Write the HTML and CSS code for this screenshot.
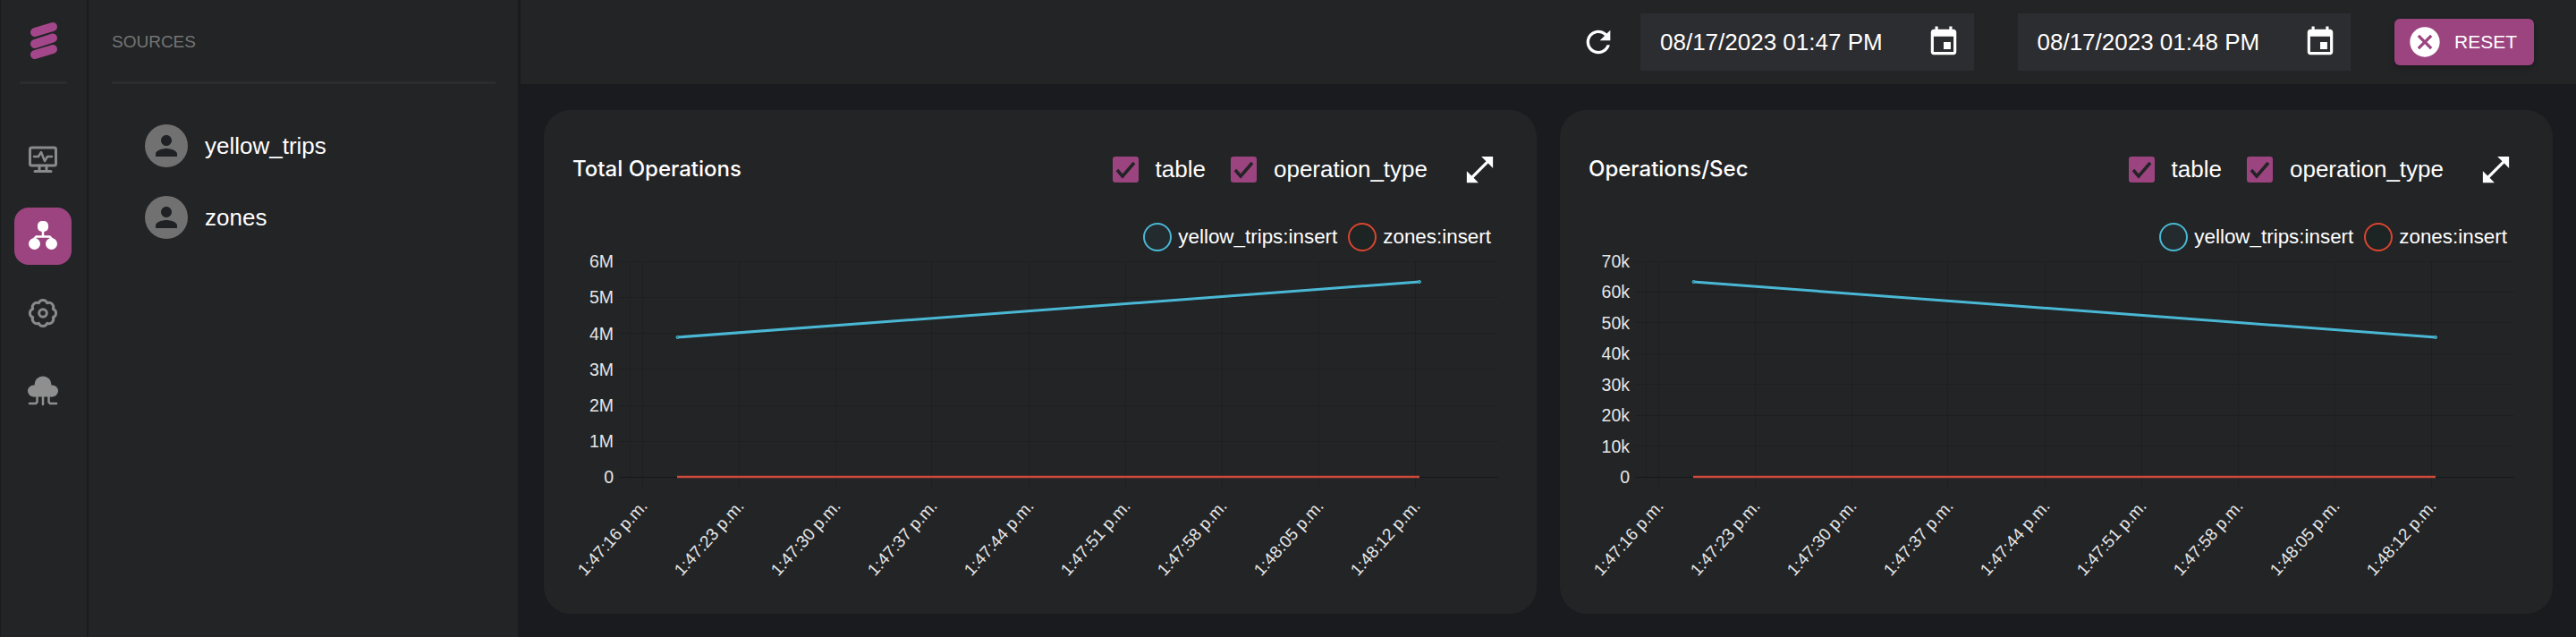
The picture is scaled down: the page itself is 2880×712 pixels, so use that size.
FILE: index.html
```html
<!DOCTYPE html>
<html lang="en">
<head>
    <meta charset="UTF-8">
    <meta name="viewport" content="width=device-width, initial-scale=1.0">
    <title>Sources</title>
    <link rel="stylesheet" href="styles.css">
</head>
<body>
    <div class="app">
        <nav class="rail">
            <div class="rail-logo">
                <svg width="48" height="48" viewBox="0 0 48 48"><path class="logo-bars" d="M14 15 L34 9 M14 28 L34 21.500 M14 40 L34 34"/></svg>
            </div>
            <div class="rail-line"></div>
            <div class="rail-items">
                <div class="rail-item">
                    <svg class="line-icon" width="48" height="48" viewBox="0 0 48 48">
                        <rect x="9.5" y="11" width="29" height="20" rx="2"/>
                        <path d="M20 31v6M28 31v6M15 37.5h18"/>
                        <path class="pulse" d="M14 21h5l3-5 4 10 3-5h5"/>
                    </svg>
                </div>
                <div class="rail-item active">
                    <svg width="48" height="48" viewBox="0 0 48 48">
                        <rect class="node" x="18" y="7" width="12" height="12" rx="5"/>
                        <circle class="node" cx="14.5" cy="32.5" r="6.5"/>
                        <circle class="node" cx="33.5" cy="32.5" r="6.5"/>
                        <path class="node-line" d="M24 19v5M14.5 28v-1.5l2-2h15l2 2V28"/>
                    </svg>
                </div>
                <div class="rail-item">
                    <svg class="line-icon" width="48" height="48" viewBox="0 0 48 48">
                        <g transform="translate(24 24)">
                            <path d="M4.7 -11.3A5 5 0 0 1 11.3 -4.7A5 5 0 0 1 11.3 4.7A5 5 0 0 1 4.7 11.3A5 5 0 0 1 -4.7 11.3A5 5 0 0 1 -11.3 4.7A5 5 0 0 1 -11.3 -4.7A5 5 0 0 1 -4.7 -11.3A5 5 0 0 1 4.7 -11.3Z"/>
                            <circle r="4.3"/>
                        </g>
                    </svg>
                </div>
                <div class="rail-item">
                    <svg width="48" height="48" viewBox="0 0 48 48">
                        <g class="cloud">
                            <circle cx="24" cy="18" r="9.5"/>
                            <circle cx="13.5" cy="25" r="6.5"/>
                            <circle cx="34.5" cy="25" r="6.5"/>
                            <rect x="13" y="22" width="22" height="9.5"/>
                        </g>
                        <path class="cloud-legs" d="M24 31v9M17.5 31v6.5l-1.5 1.5H9M30.5 31v6.5l1.5 1.5H39"/>
                    </svg>
                </div>
            </div>
        </nav>

        <aside class="sidebar">
            <div class="sidebar-title">SOURCES</div>
            <div class="sidebar-line"></div>
            <ul class="source-list">
                <li class="source-item">
                    <span class="avatar">
                        <svg width="36" height="36" viewBox="0 0 24 24"><path d="M12 12c2.21 0 4-1.79 4-4s-1.79-4-4-4-4 1.79-4 4 1.79 4 4 4zm0 2c-2.67 0-8 1.34-8 4v2h16v-2c0-2.66-5.33-4-8-4z"/></svg>
                    </span>
                    yellow_trips
                </li>
                <li class="source-item">
                    <span class="avatar">
                        <svg width="36" height="36" viewBox="0 0 24 24"><path d="M12 12c2.21 0 4-1.79 4-4s-1.79-4-4-4-4 1.79-4 4 1.79 4 4 4zm0 2c-2.67 0-8 1.34-8 4v2h16v-2c0-2.66-5.33-4-8-4z"/></svg>
                    </span>
                    zones
                </li>
            </ul>
        </aside>

        <main class="main">
            <header class="topbar">
                <svg class="white-icon" width="40" height="40" viewBox="0 0 24 24"><path d="M17.65 6.35C16.2 4.9 14.21 4 12 4c-4.42 0-7.99 3.58-7.99 8s3.57 8 7.99 8c3.73 0 6.84-2.55 7.73-6h-2.08c-.82 2.33-3.04 4-5.65 4-3.31 0-6-2.69-6-6s2.69-6 6-6c1.66 0 3.14.69 4.22 1.78L13 11h7V4l-2.35 2.35z"/></svg>
                <div class="date-field">
                    <span>08/17/2023 01:47 PM</span>
                    <svg class="white-icon" width="38" height="38" viewBox="0 0 24 24"><path d="M17 12h-5v5h5v-5zM16 1v2H8V1H6v2H5c-1.11 0-1.99.9-1.99 2L3 19c0 1.1.89 2 2 2h14c1.1 0 2-.9 2-2V5c0-1.1-.9-2-2-2h-1V1h-2zm3 18H5V8h14v11z"/></svg>
                </div>
                <div class="date-field">
                    <span>08/17/2023 01:48 PM</span>
                    <svg class="white-icon" width="38" height="38" viewBox="0 0 24 24"><path d="M17 12h-5v5h5v-5zM16 1v2H8V1H6v2H5c-1.11 0-1.99.9-1.99 2L3 19c0 1.1.89 2 2 2h14c1.1 0 2-.9 2-2V5c0-1.1-.9-2-2-2h-1V1h-2zm3 18H5V8h14v11z"/></svg>
                </div>
                <button class="reset-btn">
                    <svg class="white-icon" width="40" height="40" viewBox="0 0 24 24"><path d="M12 2C6.47 2 2 6.47 2 12s4.47 10 10 10 10-4.47 10-10S17.53 2 12 2zm5 13.59L15.59 17 12 13.41 8.41 17 7 15.59 10.59 12 7 8.41 8.41 7 12 10.59 15.59 7 17 8.41 13.41 12 17 15.59z"/></svg>
                    RESET
                </button>
            </header>

            <div class="charts">
                <section class="card">
                    <div class="card-head">
                        <h2 class="card-title">Total Operations</h2>
                        <label class="check">
                            <span class="check-box"><svg width="29" height="29" viewBox="0 0 29 29"><path d="M5 15l6 7L24 7"/></svg></span>
                            table
                        </label>
                        <label class="check">
                            <span class="check-box"><svg width="29" height="29" viewBox="0 0 29 29"><path d="M5 15l6 7L24 7"/></svg></span>
                            operation_type
                        </label>
                        <svg class="white-icon expand" width="39" height="39" viewBox="0 0 24 24"><path d="M21 11V3h-8l3.29 3.29-10 10L3 13v8h8l-3.29-3.29 10-10z"/></svg>
                    </div>
                    <div class="legend">
                        <span class="legend-dot blue"></span><span>yellow_trips:insert</span>
                        <span class="legend-dot red"></span><span>zones:insert</span>
                    </div>
                    <svg class="chart" width="1110" height="404" viewBox="0 0 1110 404">
                        <path class="grid" d="M84 10.5H1067M84 50.5H1067M84 90.5H1067M84 130.5H1067M84 171.5H1067M84 211.5H1067"/>
                        <path class="grid" d="M96.5 10V251M110.500 10V265M218.500 10V265M326.500 10V265M433.500 10V265M542.500 10V265M650.500 10V265M758.500 10V265M866.500 10V265M974.500 10V265"/>
                        <path class="axis" d="M84 251.500H1067"/>
                        <g class="y-labels">
                            <text x="78" y="10">6M</text>
                            <text x="78" y="50">5M</text>
                            <text x="78" y="91">4M</text>
                            <text x="78" y="131">3M</text>
                            <text x="78" y="171">2M</text>
                            <text x="78" y="211">1M</text>
                            <text x="78" y="251">0</text>
                        </g>
                        <g class="x-labels">
                            <text transform="translate(112 280) rotate(-48)">1:47:16 p.m.</text>
                            <text transform="translate(220 280) rotate(-48)">1:47:23 p.m.</text>
                            <text transform="translate(328 280) rotate(-48)">1:47:30 p.m.</text>
                            <text transform="translate(436 280) rotate(-48)">1:47:37 p.m.</text>
                            <text transform="translate(544 280) rotate(-48)">1:47:44 p.m.</text>
                            <text transform="translate(652 280) rotate(-48)">1:47:51 p.m.</text>
                            <text transform="translate(760 280) rotate(-48)">1:47:58 p.m.</text>
                            <text transform="translate(868 280) rotate(-48)">1:48:05 p.m.</text>
                            <text transform="translate(976 280) rotate(-48)">1:48:12 p.m.</text>
                        </g>
                        <path class="line-blue" d="M149 95L979 33"/>
                        <path class="line-red" d="M149 251H979"/>
                        <circle class="point-blue" cx="149.500" cy="95" r="1.500"/>
                        <circle class="point-blue" cx="979" cy="33" r="1.500"/>
                    </svg>
                </section>

                <section class="card">
                    <div class="card-head">
                        <h2 class="card-title">Operations/Sec</h2>
                        <label class="check">
                            <span class="check-box"><svg width="29" height="29" viewBox="0 0 29 29"><path d="M5 15l6 7L24 7"/></svg></span>
                            table
                        </label>
                        <label class="check">
                            <span class="check-box"><svg width="29" height="29" viewBox="0 0 29 29"><path d="M5 15l6 7L24 7"/></svg></span>
                            operation_type
                        </label>
                        <svg class="white-icon expand" width="39" height="39" viewBox="0 0 24 24"><path d="M21 11V3h-8l3.29 3.29-10 10L3 13v8h8l-3.29-3.29 10-10z"/></svg>
                    </div>
                    <div class="legend">
                        <span class="legend-dot blue"></span><span>yellow_trips:insert</span>
                        <span class="legend-dot red"></span><span>zones:insert</span>
                    </div>
                    <svg class="chart" width="1110" height="404" viewBox="0 0 1110 404">
                        <path class="grid" d="M84 10.5H1067M84 44.5H1067M84 78.5H1067M84 113.5H1067M84 147.5H1067M84 182.5H1067M84 216.5H1067"/>
                        <path class="grid" d="M96.5 10V251M110.500 10V265M218.500 10V265M326.500 10V265M433.500 10V265M542.500 10V265M650.500 10V265M758.500 10V265M866.500 10V265M974.500 10V265"/>
                        <path class="axis" d="M84 251.500H1067"/>
                        <g class="y-labels">
                            <text x="78" y="10">70k</text>
                            <text x="78" y="44">60k</text>
                            <text x="78" y="79">50k</text>
                            <text x="78" y="113">40k</text>
                            <text x="78" y="148">30k</text>
                            <text x="78" y="182">20k</text>
                            <text x="78" y="217">10k</text>
                            <text x="78" y="251">0</text>
                        </g>
                        <g class="x-labels">
                            <text transform="translate(112 280) rotate(-48)">1:47:16 p.m.</text>
                            <text transform="translate(220 280) rotate(-48)">1:47:23 p.m.</text>
                            <text transform="translate(328 280) rotate(-48)">1:47:30 p.m.</text>
                            <text transform="translate(436 280) rotate(-48)">1:47:37 p.m.</text>
                            <text transform="translate(544 280) rotate(-48)">1:47:44 p.m.</text>
                            <text transform="translate(652 280) rotate(-48)">1:47:51 p.m.</text>
                            <text transform="translate(760 280) rotate(-48)">1:47:58 p.m.</text>
                            <text transform="translate(868 280) rotate(-48)">1:48:05 p.m.</text>
                            <text transform="translate(976 280) rotate(-48)">1:48:12 p.m.</text>
                        </g>
                        <path class="line-blue" d="M149 33L979 95"/>
                        <path class="line-red" d="M149 251H979"/>
                        <circle class="point-blue" cx="149.500" cy="33" r="1.500"/>
                        <circle class="point-blue" cx="979" cy="95" r="1.500"/>
                    </svg>
                </section>
            </div>
        </main>
    </div>
</body>
</html>
```

FILE: styles.css
```css
* {
    box-sizing: border-box;
}
body {
    margin: 0;
    height: 712px;
    overflow: hidden;
    background: #1a1b1e;
    color: #fff;
    font-family: "Liberation Sans", Arial, sans-serif;
}
svg {
    display: block;
    flex: none;
}
.app {
    display: flex;
    height: 712px;
}

/* left rail */
.rail {
    width: 97px;
    border-left: 1px solid #1a1b1e;
    background: #222426;
    flex: none;
    margin-right: 2px;
}
.rail-logo {
    height: 91px;
    display: flex;
    align-items: flex-start;
    justify-content: center;
    padding-top: 21px;
}
.logo-bars {
    fill: none;
    stroke: #a3478a;
    stroke-width: 10;
    stroke-linecap: round;
}
.rail-line {
    height: 3px;
    margin: 0 22px 0 21px;
    background: #2c2c2d;
}
.rail-items {
    display: flex;
    flex-direction: column;
    gap: 22px;
    padding-top: 52px;
}
.rail-item {
    width: 64px;
    height: 64px;
    margin-left: 15px;
    border-radius: 16px;
    display: flex;
    align-items: center;
    justify-content: center;
}
.rail-item.active {
    background: #9c4480;
}
.line-icon {
    fill: none;
    stroke: #8a8a8a;
    stroke-width: 3;
    stroke-linecap: round;
    stroke-linejoin: round;
}
.pulse {
    stroke-width: 2.5;
}
.node {
    fill: #fff;
}
.node-line {
    fill: none;
    stroke: #fff;
    stroke-width: 2.5;
}
.cloud {
    fill: #8f8f8f;
}
.cloud-legs {
    fill: none;
    stroke: #8f8f8f;
    stroke-width: 2.5;
    stroke-linecap: round;
}

/* sources */
.sidebar {
    width: 480px;
    flex: none;
    background: #222426;
    margin-right: 3px;
}
.sidebar-title {
    height: 91px;
    padding: 36px 0 0 26px;
    font-size: 19px;
    line-height: 22px;
    color: #757575;
}
.sidebar-line {
    height: 3px;
    margin: 0 25px 0 26px;
    background: #2c2c2d;
}
.source-list {
    list-style: none;
    margin: 0;
    padding: 45px 0 0 63px;
    display: flex;
    flex-direction: column;
    gap: 32px;
}
.source-item {
    display: flex;
    align-items: center;
    gap: 19px;
    height: 48px;
    font-size: 26px;
}
.avatar {
    width: 48px;
    height: 48px;
    border-radius: 50%;
    background: #717171;
    display: flex;
    align-items: center;
    justify-content: center;
}
.avatar path {
    fill: #202125;
}

/* top bar */
.main {
    flex: 1;
    min-width: 0;
}
.topbar {
    height: 94px;
    background: #222426;
    display: flex;
    align-items: center;
    justify-content: flex-end;
    padding-right: 47px;
}
.white-icon {
    fill: #fff;
}
.date-field {
    width: 372.5px;
    height: 64px;
    margin-left: 49px;
    padding: 0 15px 0 22px;
    background: #2c2d30;
    display: flex;
    align-items: center;
    justify-content: space-between;
    font-size: 26px;
}
.topbar > .white-icon + .date-field {
    margin-left: 27px;
}
.reset-btn {
    width: 156px;
    height: 52px;
    margin-left: 49px;
    padding: 0 0 0 14px;
    border: none;
    border-radius: 6px;
    background: #9c4480;
    color: #fff;
    font-family: inherit;
    font-size: 21px;
    display: flex;
    align-items: center;
    gap: 13px;
    box-shadow: 0 3px 6px rgba(0, 0, 0, 0.25);
}

/* chart cards */
.charts {
    display: grid;
    grid-template-columns: 1fr 1fr;
    gap: 26px;
    padding: 29px 26px 26px;
}
.card {
    height: 563px;
    border-radius: 30px;
    background: #222426;
    padding-top: 44px;
}
.card-head {
    display: flex;
    align-items: center;
    height: 44px;
    padding: 0 44px 0 32px;
}
.card-title {
    margin: -2px auto 0 0;
    font-family: Inter, sans-serif;
    font-size: 24px;
    font-weight: 500;
}
.check {
    display: flex;
    align-items: center;
    gap: 19px;
    margin-right: 28px;
    font-size: 26px;
}
.check:last-of-type {
    margin-right: 39px;
}
.check-box {
    width: 29px;
    height: 29px;
    border-radius: 3px;
    background: #9c4480;
}
.check-box path {
    fill: none;
    stroke: #222426;
    stroke-width: 3.5;
}
.legend {
    display: flex;
    align-items: center;
    justify-content: flex-end;
    height: 33px;
    margin-top: 37px;
    margin-bottom: 1px;
    padding-right: 51px;
    font-size: 22.4px;
}
.legend-dot {
    width: 32px;
    height: 32px;
    margin-right: 7px;
    border-radius: 50%;
    border: 2px solid;
}
.legend span + .legend-dot {
    margin-left: 12px;
}
.legend-dot.blue {
    border-color: #4ab8d4;
    background: rgba(74, 184, 212, 0.05);
}
.legend-dot.red {
    border-color: #d9452f;
    background: rgba(0, 40, 30, 0.15);
}
.grid {
    fill: none;
    stroke: rgba(0, 0, 0, 0.13);
    stroke-width: 1;
}
.axis {
    fill: none;
    stroke: rgba(0, 0, 0, 0.35);
    stroke-width: 1;
}
.y-labels text {
    fill: #e6e6e6;
    font-size: 19.500px;
    text-anchor: end;
    dominant-baseline: central;
}
.x-labels text {
    fill: #e6e6e6;
    font-size: 19px;
    text-anchor: end;
    dominant-baseline: central;
}
.line-blue {
    fill: none;
    stroke: #4ab8d4;
    stroke-width: 3;
}
.line-red {
    fill: none;
    stroke: #d0493a;
    stroke-width: 2.500;
}
.point-blue {
    fill: #2c7f95;
    stroke: #4ab8d4;
}
```
